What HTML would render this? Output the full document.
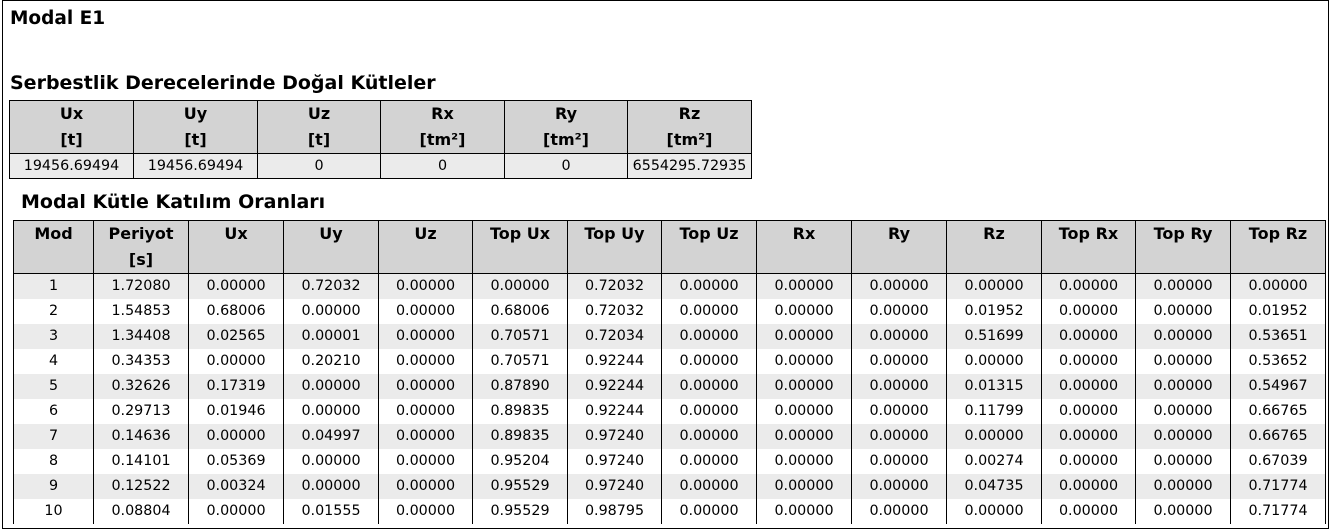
<!DOCTYPE html>
<html><head><meta charset="utf-8"><style>
body{margin:0;width:1332px;height:531px;background:#fff;font-family:Verdana,"DejaVu Sans",sans-serif;color:#000;position:relative;overflow:hidden}
.frame{position:absolute;left:2px;top:0;width:1327px;height:529px;border:1px solid #000;box-sizing:border-box}
h1{position:absolute;left:10px;top:8px;margin:0;font-size:18.5px;font-weight:bold}
h2{position:absolute;margin:0;font-size:19px;font-weight:bold}
table{position:absolute;border-collapse:collapse;table-layout:fixed;font-size:14.3px}
th{background:#d3d3d3;font-weight:bold;font-size:16px;line-height:26px;vertical-align:top;padding:0;border:1px solid #000}
td{text-align:center;padding:0;line-height:25px;height:25px;border-left:1px solid #000;border-right:1px solid #000}
tr.o td{background:#ebebeb}
#t1 td{border:1px solid #000;background:#ebebeb;line-height:24px;height:24px}
</style></head><body>
<div class="frame"></div>
<h1>Modal E1</h1>
<h2 style="left:10px;top:72px">Serbestlik Derecelerinde Doğal Kütleler</h2>
<table id="t1" style="left:9px;top:100px;width:742px">
<colgroup><col style="width:124px"><col style="width:124px"><col style="width:123px"><col style="width:124px"><col style="width:123px"><col style="width:124px"></colgroup>
<tr><th>Ux<br>[t]</th><th>Uy<br>[t]</th><th>Uz<br>[t]</th><th>Rx<br>[tm²]</th><th>Ry<br>[tm²]</th><th>Rz<br>[tm²]</th></tr>
<tr><td>19456.69494</td><td>19456.69494</td><td>0</td><td>0</td><td>0</td><td>6554295.72935</td></tr>
</table>
<h2 style="left:21px;top:191px">Modal Kütle Katılım Oranları</h2>
<table style="left:13px;top:220px;width:1313px">
<colgroup><col style="width:80px"><col style="width:95px"><col style="width:95px"><col style="width:95px"><col style="width:94px"><col style="width:95px"><col style="width:94px"><col style="width:95px"><col style="width:95px"><col style="width:95px"><col style="width:95px"><col style="width:94px"><col style="width:95px"><col style="width:95px"></colgroup>
<tr><th>Mod</th><th>Periyot<br>[s]</th><th>Ux</th><th>Uy</th><th>Uz</th><th>Top Ux</th><th>Top Uy</th><th>Top Uz</th><th>Rx</th><th>Ry</th><th>Rz</th><th>Top Rx</th><th>Top Ry</th><th>Top Rz</th></tr>
<tr class="o"><td>1</td><td>1.72080</td><td>0.00000</td><td>0.72032</td><td>0.00000</td><td>0.00000</td><td>0.72032</td><td>0.00000</td><td>0.00000</td><td>0.00000</td><td>0.00000</td><td>0.00000</td><td>0.00000</td><td>0.00000</td></tr>
<tr><td>2</td><td>1.54853</td><td>0.68006</td><td>0.00000</td><td>0.00000</td><td>0.68006</td><td>0.72032</td><td>0.00000</td><td>0.00000</td><td>0.00000</td><td>0.01952</td><td>0.00000</td><td>0.00000</td><td>0.01952</td></tr>
<tr class="o"><td>3</td><td>1.34408</td><td>0.02565</td><td>0.00001</td><td>0.00000</td><td>0.70571</td><td>0.72034</td><td>0.00000</td><td>0.00000</td><td>0.00000</td><td>0.51699</td><td>0.00000</td><td>0.00000</td><td>0.53651</td></tr>
<tr><td>4</td><td>0.34353</td><td>0.00000</td><td>0.20210</td><td>0.00000</td><td>0.70571</td><td>0.92244</td><td>0.00000</td><td>0.00000</td><td>0.00000</td><td>0.00000</td><td>0.00000</td><td>0.00000</td><td>0.53652</td></tr>
<tr class="o"><td>5</td><td>0.32626</td><td>0.17319</td><td>0.00000</td><td>0.00000</td><td>0.87890</td><td>0.92244</td><td>0.00000</td><td>0.00000</td><td>0.00000</td><td>0.01315</td><td>0.00000</td><td>0.00000</td><td>0.54967</td></tr>
<tr><td>6</td><td>0.29713</td><td>0.01946</td><td>0.00000</td><td>0.00000</td><td>0.89835</td><td>0.92244</td><td>0.00000</td><td>0.00000</td><td>0.00000</td><td>0.11799</td><td>0.00000</td><td>0.00000</td><td>0.66765</td></tr>
<tr class="o"><td>7</td><td>0.14636</td><td>0.00000</td><td>0.04997</td><td>0.00000</td><td>0.89835</td><td>0.97240</td><td>0.00000</td><td>0.00000</td><td>0.00000</td><td>0.00000</td><td>0.00000</td><td>0.00000</td><td>0.66765</td></tr>
<tr><td>8</td><td>0.14101</td><td>0.05369</td><td>0.00000</td><td>0.00000</td><td>0.95204</td><td>0.97240</td><td>0.00000</td><td>0.00000</td><td>0.00000</td><td>0.00274</td><td>0.00000</td><td>0.00000</td><td>0.67039</td></tr>
<tr class="o"><td>9</td><td>0.12522</td><td>0.00324</td><td>0.00000</td><td>0.00000</td><td>0.95529</td><td>0.97240</td><td>0.00000</td><td>0.00000</td><td>0.00000</td><td>0.04735</td><td>0.00000</td><td>0.00000</td><td>0.71774</td></tr>
<tr><td>10</td><td>0.08804</td><td>0.00000</td><td>0.01555</td><td>0.00000</td><td>0.95529</td><td>0.98795</td><td>0.00000</td><td>0.00000</td><td>0.00000</td><td>0.00000</td><td>0.00000</td><td>0.00000</td><td>0.71774</td></tr>
</table>
</body></html>
